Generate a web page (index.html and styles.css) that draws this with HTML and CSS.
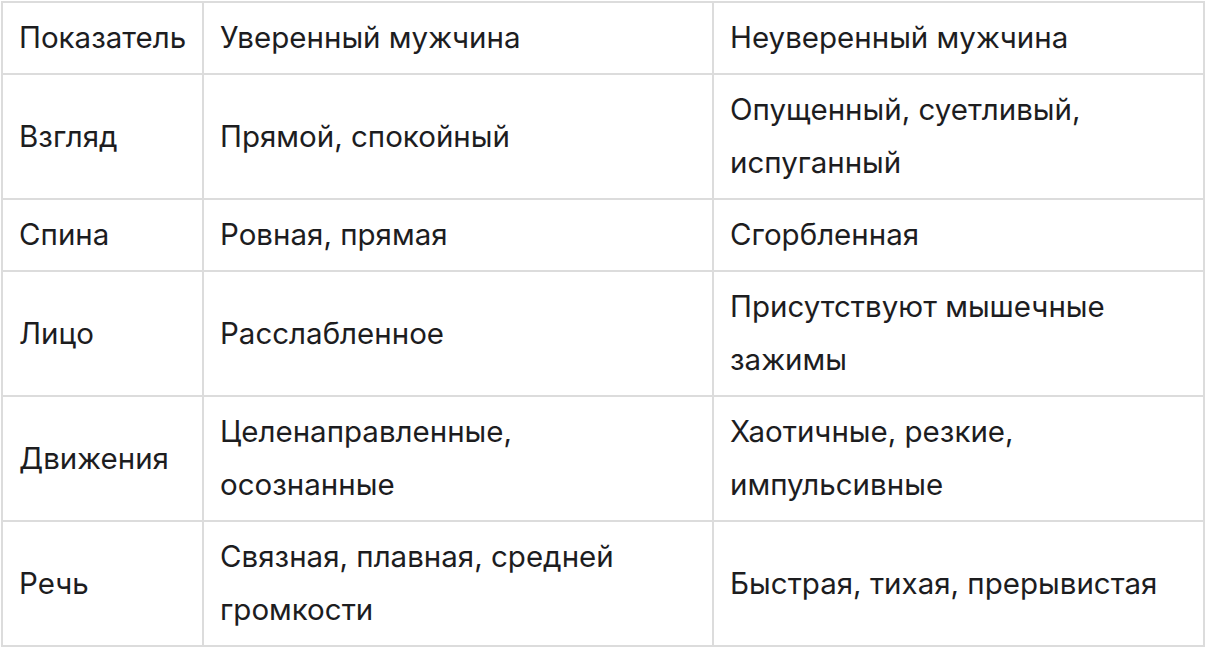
FILE: index.html
```html
<!DOCTYPE html>
<html lang="ru">
<head>
<meta charset="utf-8">
<title>Уверенный и неуверенный мужчина</title>
<link rel="stylesheet" href="styles.css">
</head>
<body>
<table class="compare">
  <colgroup>
    <col class="c1">
    <col class="c2">
    <col class="c3">
  </colgroup>
  <tr><td>Показатель</td><td>Уверенный мужчина</td><td>Неуверенный мужчина</td></tr>
  <tr><td>Взгляд</td><td>Прямой, спокойный</td><td>Опущенный, суетливый, испуганный</td></tr>
  <tr><td>Спина</td><td>Ровная, прямая</td><td>Сгорбленная</td></tr>
  <tr><td>Лицо</td><td>Расслабленное</td><td>Присутствуют мышечные зажимы</td></tr>
  <tr><td>Движения</td><td>Целенаправленные, осознанные</td><td>Хаотичные, резкие, импульсивные</td></tr>
  <tr><td>Речь</td><td>Связная, плавная, средней громкости</td><td>Быстрая, тихая, прерывистая</td></tr>
</table>
</body>
</html>
```
FILE: styles.css
```css
html, body {
  margin: 0;
  padding: 0;
  background: #ffffff;
}

body {
  font-family: Inter, "Noto Sans", "Liberation Sans", sans-serif;
  color: #1d1d1f;
}

.compare {
  margin: 1px 0 0 1px;
  width: 1204px;
  table-layout: fixed;
  border-spacing: 0;
  border-top: 2px solid #dcdcdc;
  border-left: 2px solid #dcdcdc;
}

.c1 { width: 201px; }
.c2 { width: 510px; }
.c3 { width: 491px; }

.compare td {
  border-right: 2px solid #dcdcdc;
  border-bottom: 2px solid #dcdcdc;
  padding: 8px 16px 9px 16px;
  font-size: 29.5px;
  line-height: 53px;
  vertical-align: middle;
  text-align: left;
}

.compare td + td {
  padding-right: 30px;
}
```
